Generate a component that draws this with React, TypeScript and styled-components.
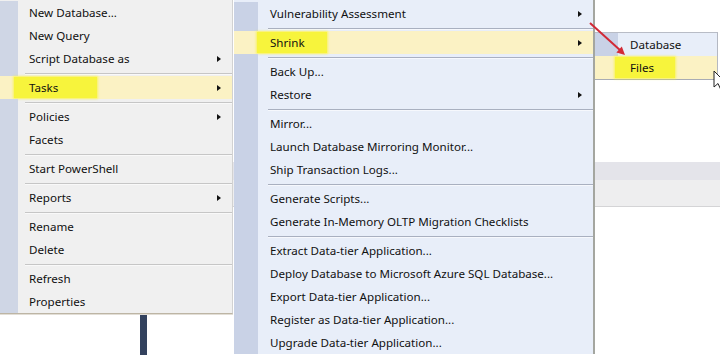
import React from "react";
import styled, { createGlobalStyle, css } from "styled-components";

type Variant = "grey" | "blue";

interface Item {
  label: string;
  sub?: boolean;
  active?: boolean;
  mark?: { lead: number; width: number };
}

type Entry = Item | "sep";

const objectMenu: Entry[] = [
  { label: "New Database..." },
  { label: "New Query" },
  { label: "Script Database as", sub: true },
  "sep",
  { label: "Tasks", sub: true, active: true, mark: { lead: 15, width: 83 } },
  "sep",
  { label: "Policies", sub: true },
  { label: "Facets" },
  "sep",
  { label: "Start PowerShell" },
  "sep",
  { label: "Reports", sub: true },
  "sep",
  { label: "Rename" },
  { label: "Delete" },
  "sep",
  { label: "Refresh" },
  { label: "Properties" },
];

const tasksMenu: Entry[] = [
  { label: "Vulnerability Assessment", sub: true },
  "sep",
  { label: "Shrink", sub: true, active: true, mark: { lead: 13, width: 70 } },
  "sep",
  { label: "Back Up..." },
  { label: "Restore", sub: true },
  "sep",
  { label: "Mirror..." },
  { label: "Launch Database Mirroring Monitor..." },
  { label: "Ship Transaction Logs..." },
  "sep",
  { label: "Generate Scripts..." },
  { label: "Generate In-Memory OLTP Migration Checklists" },
  "sep",
  { label: "Extract Data-tier Application..." },
  { label: "Deploy Database to Microsoft Azure SQL Database..." },
  { label: "Export Data-tier Application..." },
  { label: "Register as Data-tier Application..." },
  { label: "Upgrade Data-tier Application..." },
];

const shrinkMenu: Entry[] = [
  { label: "Database" },
  { label: "Files", active: true, mark: { lead: 15, width: 60 } },
];

const palette = {
  grey: { bg: "#f0f0f0", gutter: "#cfd6e5", sep: "#c6c6c6" },
  blue: { bg: "#e8eef9", gutter: "#c9d2e6", sep: "#a9b0c0" },
};

const GlobalStyle = createGlobalStyle`
  html, body {
    margin: 0;
    padding: 0;
    background: #ffffff;
  }
  body {
    font-family: "Noto Sans", "Segoe UI", "Liberation Sans", sans-serif;
  }
`;

const Stage = styled.div`
  position: relative;
  width: 720px;
  height: 355px;
  overflow: hidden;
  background: #ffffff;
`;

// the SSMS window behind the menus
const Backdrop = styled.div`
  display: flex;
  height: 100%;
`;

const TreePane = styled.div`
  width: 140px;
`;

const Splitter = styled.div`
  width: 7px;
  background: #33425e;
`;

const ContentPane = styled.div`
  flex: 1;
  padding-top: 162px;
`;

const GridHeader = styled.div`
  height: 18px;
  background: #e4e4ea;
`;

const GridRow = styled.div`
  height: 26px;
  background: #eeeeef;
  border-bottom: 1px solid #d4d4d6;
`;

const MenuLayer = styled.div`
  position: absolute;
  inset: 0;
  display: flex;
  align-items: flex-start;
`;

const Menu = styled.div<{ $variant: Variant; $width: number; $top?: number; $gap?: number }>`
  display: flex;
  flex-direction: column;
  box-sizing: border-box;
  width: ${(p) => p.$width}px;
  margin-top: ${(p) => p.$top ?? 0}px;
  margin-left: ${(p) => p.$gap ?? 0}px;
  background: ${(p) => palette[p.$variant].bg};
  font-size: 11.6px;
  color: #111111;
  ${(p) =>
    p.$variant === "grey"
      ? css`
          padding-top: 1px;
          border-right: 1px solid #d2d2d2;
          border-bottom: 1px solid #bdb5a4;
          box-shadow: 0 1px 0 #e2ded6;
        `
      : css`
          padding-top: 2px;
          border-right: 2px solid #a4a6a0;
        `}
`;

const SubMenu = styled(Menu)`
  padding-top: 0;
  border-top: 1px solid #b8bcc6;
  border-bottom: 1px solid #a8acb4;
  border-right: 1px solid #b4b8c2;
`;

const Row = styled.div<{ $active?: boolean }>`
  display: flex;
  align-items: stretch;
  height: 23px;
  background: ${(p) => (p.$active ? "#fbf2c4" : "transparent")};
`;

const Gutter = styled.div<{ $variant: Variant; $width: number; $active?: boolean }>`
  flex: none;
  width: ${(p) => p.$width}px;
  background: ${(p) => (p.$active ? "#fbf2c4" : palette[p.$variant].gutter)};
`;

const Label = styled.span<{ $pad: number }>`
  display: flex;
  align-items: center;
  padding-left: ${(p) => p.$pad}px;
  white-space: nowrap;
`;

const Marker = styled.span<{ $lead: number; $width: number; $pad: number }>`
  display: flex;
  align-items: center;
  box-sizing: border-box;
  margin: 1px 0 1px ${(p) => p.$pad - p.$lead}px;
  padding-left: ${(p) => p.$lead}px;
  width: ${(p) => p.$width}px;
  background: #f7f43c;
  box-shadow: 0 0 2px 1px rgba(247, 244, 60, 0.7);
  white-space: nowrap;
`;

const SubArrow = styled.span`
  align-self: center;
  margin-left: auto;
  margin-right: 11px;
  width: 0;
  height: 0;
  border-left: 4px solid #111;
  border-top: 3.5px solid transparent;
  border-bottom: 3.5px solid transparent;
`;

const Separator = styled.div<{ $variant: Variant; $width: number }>`
  display: flex;
  align-items: center;
  height: 6px;

  &::before {
    content: "";
    flex: none;
    align-self: stretch;
    width: ${(p) => p.$width}px;
    background: ${(p) => palette[p.$variant].gutter};
  }

  &::after {
    content: "";
    flex: 1;
    margin-left: ${(p) => (p.$variant === "grey" ? 7 : 10)}px;
    height: 1px;
    background: ${(p) => palette[p.$variant].sep};
    box-shadow: 0 1px 0 rgba(255, 255, 255, 0.6);
  }
`;

const Overlay = styled.svg<{ $left: number; $top: number }>`
  position: absolute;
  left: ${(p) => p.$left}px;
  top: ${(p) => p.$top}px;
`;

function MenuRows({
  entries,
  variant,
  gutter,
  pad,
}: {
  entries: Entry[];
  variant: Variant;
  gutter: number;
  pad: number;
}) {
  return (
    <>
      {entries.map((e, i) =>
        e === "sep" ? (
          <Separator key={i} $variant={variant} $width={gutter} />
        ) : (
          <Row key={i} $active={e.active}>
            <Gutter $variant={variant} $width={gutter} $active={e.active} />
            {e.mark ? (
              <Marker $lead={e.mark.lead} $width={e.mark.width} $pad={pad}>
                {e.label}
              </Marker>
            ) : (
              <Label $pad={pad}>{e.label}</Label>
            )}
            {e.sub && <SubArrow />}
          </Row>
        )
      )}
    </>
  );
}

export default function App() {
  return (
    <Stage>
      <GlobalStyle />
      <Backdrop>
        <TreePane />
        <Splitter />
        <ContentPane>
          <GridHeader />
          <GridRow />
        </ContentPane>
      </Backdrop>

      <MenuLayer>
        <Menu $variant="grey" $width={233}>
          <MenuRows entries={objectMenu} variant="grey" gutter={18} pad={11} />
        </Menu>
        <Menu $variant="blue" $width={361} $gap={1}>
          <MenuRows entries={tasksMenu} variant="blue" gutter={24} pad={12} />
        </Menu>
        <SubMenu $variant="blue" $width={123} $top={32}>
          <MenuRows entries={shrinkMenu} variant="blue" gutter={23} pad={12} />
        </SubMenu>
      </MenuLayer>

      {/* red annotation arrow */}
      <Overlay $left={585} $top={18} width={50} height={45} viewBox="0 0 50 45">
        <line x1={5} y1={5} x2={36} y2={33} stroke="#d22a36" strokeWidth={2} />
        <polygon points="40,37 31.4,34.6 36.8,28.6" fill="#d22a36" />
      </Overlay>

      {/* mouse pointer, cut by the right edge */}
      <Overlay $left={713} $top={70} width={14} height={22} viewBox="0 0 14 22">
        <path
          d="M1 1 L1 17 L5 13.5 L8 20 L10.5 19 L7.5 12.5 L12.5 12.5 Z"
          fill="#ffffff"
          stroke="#222"
          strokeWidth={1}
          strokeLinejoin="round"
        />
      </Overlay>
    </Stage>
  );
}
